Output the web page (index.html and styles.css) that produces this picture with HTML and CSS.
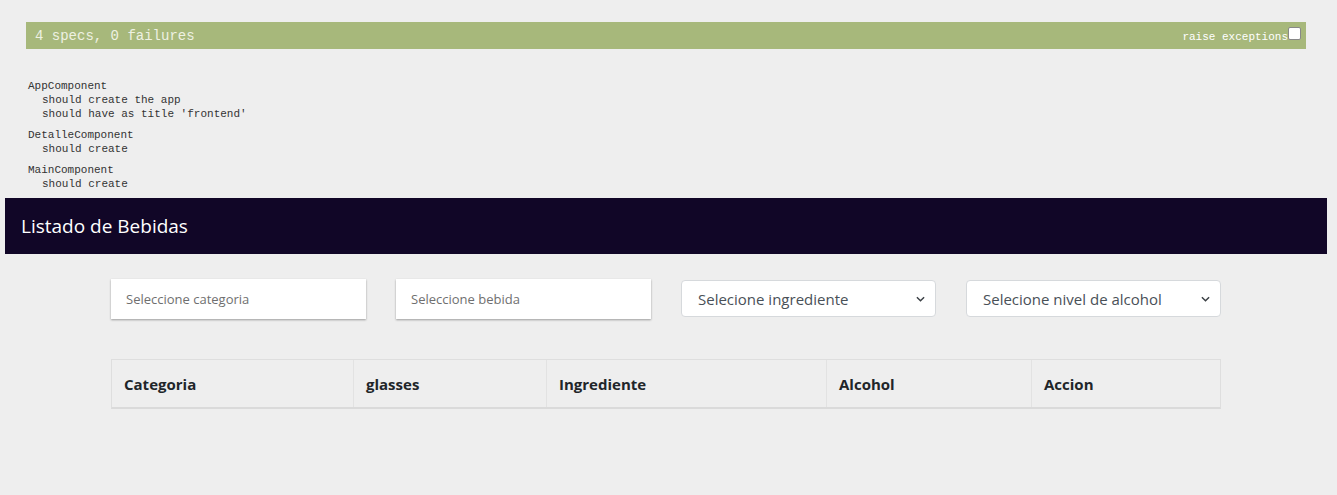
FILE: index.html
```html
<!DOCTYPE html>
<html lang="es">
<head>
<meta charset="utf-8">
<title>Listado de Bebidas</title>
<link rel="stylesheet" href="styles.css">
</head>
<body>
<div class="reporter">
  <div class="bar">
    <span class="bar-text">4 specs, 0 failures</span>
    <label class="raise">raise exceptions<span class="check"></span></label>
  </div>
  <div class="results">
    <div class="suite">
      <div class="suite-name">AppComponent</div>
      <div class="spec">should create the app</div>
      <div class="spec">should have as title 'frontend'</div>
    </div>
    <div class="suite">
      <div class="suite-name">DetalleComponent</div>
      <div class="spec">should create</div>
    </div>
    <div class="suite">
      <div class="suite-name">MainComponent</div>
      <div class="spec">should create</div>
    </div>
  </div>
</div>
<div class="app">
  <header class="header">Listado de Bebidas</header>
  <div class="container">
    <div class="filters">
      <div class="input">Seleccione categoria</div>
      <div class="input">Seleccione bebida</div>
      <div class="select"><span>Selecione ingrediente</span><svg class="chev" viewBox="0 0 10 6" width="9" height="6"><path d="M1 1l4 4 4-4" fill="none" stroke="#3a3f44" stroke-width="1.6"/></svg></div>
      <div class="select"><span>Selecione nivel de alcohol</span><svg class="chev" viewBox="0 0 10 6" width="9" height="6"><path d="M1 1l4 4 4-4" fill="none" stroke="#3a3f44" stroke-width="1.6"/></svg></div>
    </div>
    <div class="table">
      <div class="th c1">Categoria</div>
      <div class="th c2">glasses</div>
      <div class="th c3">Ingrediente</div>
      <div class="th c4">Alcohol</div>
      <div class="th c5">Accion</div>
    </div>
  </div>
</div>
</body>
</html>
```
FILE: styles.css
```css
html, body {
  margin: 0;
  background: #eeeeee;
}
body {
  width: 1337px;
  height: 495px;
  overflow: hidden;
}
.reporter {
  padding: 22px 31px 0 26px;
  font-family: "Liberation Mono", monospace;
}
.bar {
  height: 27px;
  background: #a7b87b;
  display: flex;
  align-items: center;
  justify-content: space-between;
  padding-left: 9px;
  color: #eef1e2;
}
.bar-text {
  font-size: 14px;
}
.raise {
  display: flex;
  align-items: center;
  font-size: 11px;
  color: #ffffff;
  margin-top: 2px;
  margin-right: 5px;
}
.check {
  display: inline-block;
  width: 11px;
  height: 11px;
  background: #fff;
  border: 1px solid #888;
  border-radius: 2px;
  margin-top: -7px;
}
.results {
  padding: 30px 0 0 2px;
  font-size: 11px;
  line-height: 14px;
  color: #333;
}
.suite {
  margin-bottom: 7px;
}
.suite:last-child {
  margin-bottom: 7px;
}
.spec {
  padding-left: 14px;
}
.app {
  margin: 0 10px 0 5px;
  font-family: "Open Sans", "Noto Sans", sans-serif;
}
.header {
  height: 56px;
  background: #110627;
  color: #ffffff;
  font-size: 19px;
  display: flex;
  align-items: center;
  padding-left: 16px;
}
.container {
  width: 1110px;
  margin: 0 auto;
}
.filters {
  display: flex;
  gap: 30px;
  margin-top: 25px;
  align-items: flex-start;
}
.input {
  width: 255px;
  height: 40px;
  box-sizing: border-box;
  background: #fff;
  box-shadow: 0 1px 2px rgba(0,0,0,0.35);
  padding-left: 15px;
  display: flex;
  align-items: center;
  font-size: 13px;
  color: #6f6f6f;
}
.select {
  width: 255px;
  height: 37px;
  margin-top: 1px;
  box-sizing: border-box;
  background: #fff;
  border: 1px solid #d6d9dc;
  border-radius: 4px;
  padding: 0 10px 0 16px;
  display: flex;
  align-items: center;
  justify-content: space-between;
  font-size: 15px;
  color: #495057;
}
.chev {
  display: block;
}
.table {
  display: flex;
  margin-top: 40px;
  border: 1px solid #dedede;
  border-bottom: 2px solid #dadada;
  height: 50px;
  box-sizing: border-box;
}
.th {
  box-sizing: border-box;
  padding-left: 12px;
  display: flex;
  align-items: center;
  font-weight: bold;
  font-size: 15px;
  color: #212529;
  border-left: 1px solid #e2e2e2;
}
.th.c1 { width: 241px; border-left: none; }
.th.c2 { width: 193px; }
.th.c3 { width: 280px; }
.th.c4 { width: 205px; }
.th.c5 { flex: 1; }
```
